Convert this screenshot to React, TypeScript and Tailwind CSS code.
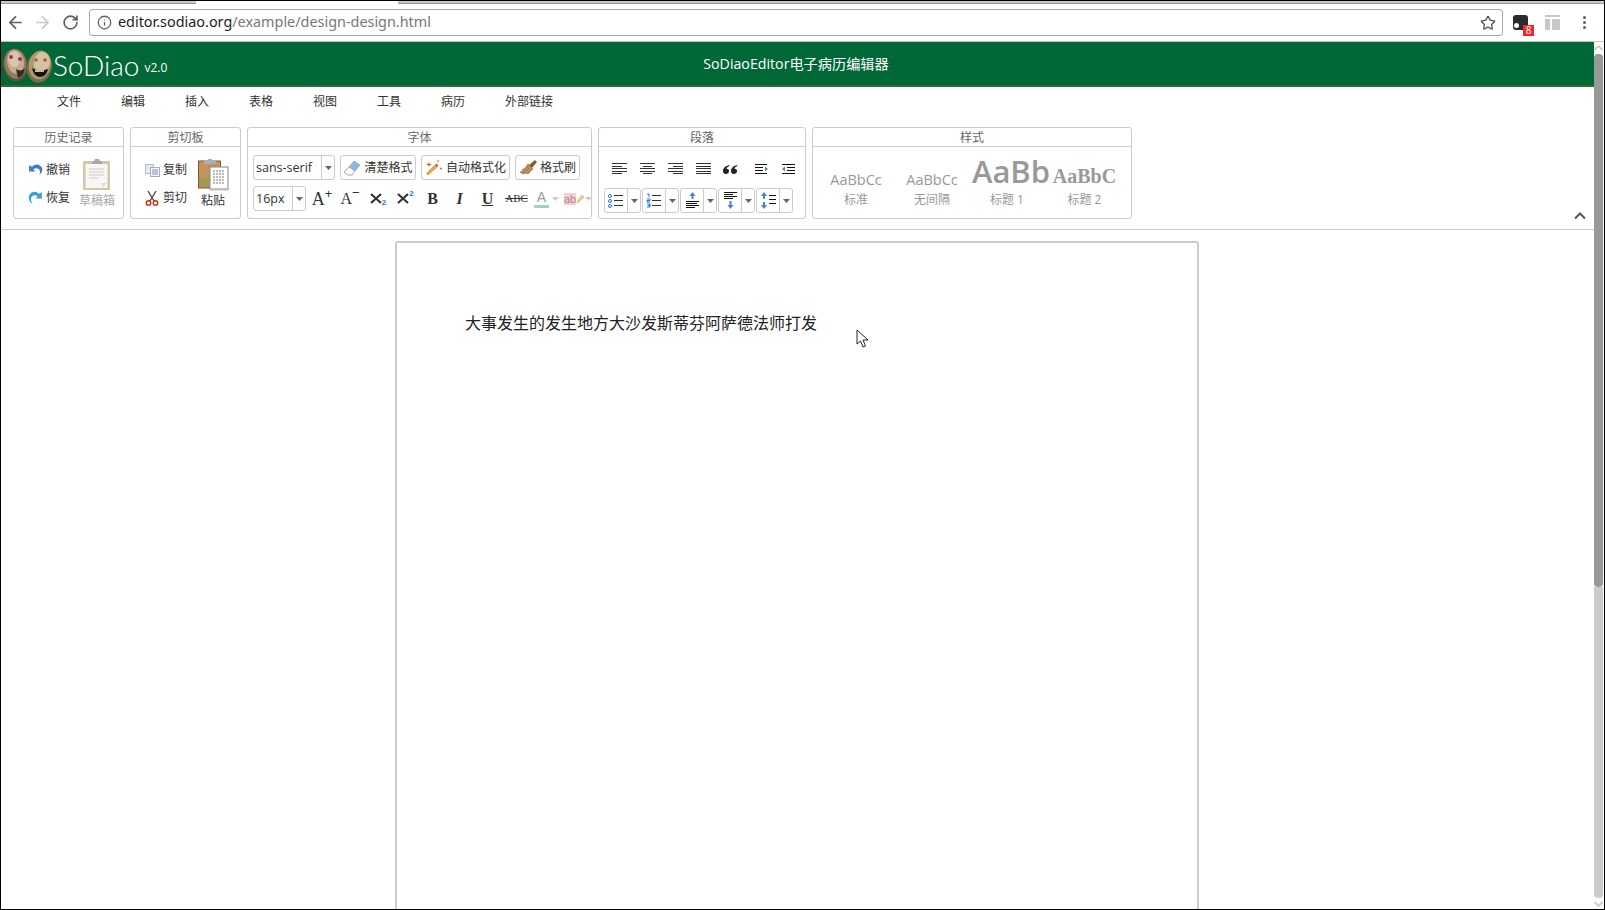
import React from "react";
import { ArrowLeft, ArrowRight, RotateCw, Info, Star } from "lucide-react";

const Caret = ({ c = "#666" }: { c?: string }) => (
  <svg width="7" height="4" viewBox="0 0 7 4" className="shrink-0"><path d="M0 0h7L3.5 4z" fill={c} /></svg>
);

const Group = ({ title, className, children }: { title: string; className: string; children: React.ReactNode }) => (
  <div className={`h-[92px] border border-[#ccc] rounded-[3px] flex flex-col shrink-0 ${className}`}>
    <div className="h-[19px] border-b border-[#ccc] text-[12px] leading-[20px] text-center text-[#666] shrink-0">{title}</div>
    <div className="flex-1 relative min-h-0">{children}</div>
  </div>
);

const Undo = () => (
  <svg width="15" height="15" viewBox="0 0 14 14"><path d="M1 2v6h6L5 6c2-2 5-1 6 1 .6 1.500.2 3-1 4 3-1 4-4 3-6.500C11.500 1.500 7 0 3.800 3.600z" fill="#3a7fc8" /></svg>
);
const Redo = () => (
  <svg width="15" height="17" viewBox="0 0 14 16"><path d="M13 2v6H7l2-2C7 4 4 5 3 7c-.6 1.500-.2 4 1.500 6C1.500 12 0 8 1 5 2.500 1.500 7 0 10.200 3.600z" fill="#3a9fd8" /></svg>
);
const Clipboard = () => (
  <svg width="30" height="33" viewBox="0 0 30 33">
    <rect x="1" y="3" width="27" height="29" fill="#cfc9a8" rx="1" />
    <rect x="3.500" y="6" width="22" height="24" fill="#f6f6f3" />
    <path d="M10 6V3h2l1-2h4l1 2h2v3z" fill="#a8a8a8" />
    <path d="M7 11h15M7 14h15M7 17h15M7 20h10" stroke="#ccc" />
    <path d="M20 30l5-5h-5z" fill="#ddd" />
  </svg>
);
const Copy = () => (
  <svg width="15" height="13" viewBox="0 0 15 13">
    <rect x="0.500" y="0.500" width="8" height="9" fill="#e8eaf2" stroke="#b5b8c8" />
    <rect x="5.500" y="3.500" width="9" height="9" fill="#f3f3f8" stroke="#a8acc0" />
    <path d="M7 6h6M7 8h6M7 10h6" stroke="#8890b8" />
  </svg>
);
const Scissors = () => (
  <svg width="14" height="16" viewBox="0 0 14 16">
    <path d="M11 1L5 11M3 1l6 10" stroke="#444" strokeWidth="1.300" fill="none" />
    <circle cx="3.500" cy="13" r="2.300" stroke="#d62c1a" strokeWidth="1.400" fill="none" />
    <circle cx="10.500" cy="13" r="2.300" stroke="#d62c1a" strokeWidth="1.400" fill="none" />
  </svg>
);
const Paste = () => (
  <svg width="31" height="33" viewBox="0 0 31 33">
    <rect x="0.500" y="3" width="22" height="27" fill="#c6925e" stroke="#7a5a34" />
    <rect x="1" y="20" width="21" height="9" fill="#a29a52" />
    <path d="M6 6V3h3l1-2h4l1 2h3v3z" fill="#a8b0b4" />
    <rect x="12" y="9" width="18" height="22" fill="#fff" stroke="#888" />
    <path d="M15 13h12M15 16h12M15 19h12M15 22h12M15 25h12" stroke="#777" strokeDasharray="2 1" />
    <path d="M13 32h18" stroke="#bbb" />
  </svg>
);
const Eraser = () => (
  <svg width="18" height="16" viewBox="0 0 18 16">
    <path d="M11 1l6 4-5 6-6-4z" fill="#8bb8e8" stroke="#8a9aaa" strokeWidth=".6" />
    <path d="M6 7l6 4-3 4H5L1 12z" fill="#fafafa" stroke="#a8a8a8" />
  </svg>
);
const Wand = () => (
  <svg width="18" height="17" viewBox="0 0 18 17">
    <path d="M3 16l-1.500-1.500L10 6l2 2z" fill="#f0a93a" stroke="#b06a20" strokeWidth=".5" />
    <path d="M10 6l1.500-1.500 2 2L12 8z" fill="#d4553a" />
    <path d="M4 3l.8 1.800L7 5.500 4.800 6.200 4 8 3.200 6.200 1 5.500l2.200-.7z" fill="#e0662a" />
    <path d="M13 0l.6 1.400 1.400.6-1.400.6L13 4l-.6-1.400L11 2l1.400-.6z" fill="#e8a030" />
    <path d="M16 8l.5 1 1 .5-1 .5-.5 1-.5-1-1-.5 1-.5z" fill="#d65a30" />
  </svg>
);
const Brush = () => (
  <svg width="18" height="15" viewBox="0 0 18 15">
    <path d="M10 5l6-5 2 2-5 6z" fill="#8a5a2c" />
    <path d="M9 4l5 5-2 2-3 3-2-1-3 1-3-2 4-1-2-1 3-2z" fill="#b98a52" stroke="#7a5a34" strokeWidth=".5" />
  </svg>
);
const lines = (rows: number[][], stroke = "#333") => rows.map(([x1, y, x2], i) => <path key={i} d={`M${x1} ${y + 0.5}H${x2}`} stroke={stroke} />);

const Align = ({ rows }: { rows: number[][] }) => <svg width="15" height="12" viewBox="0 0 15 12">{lines(rows)}</svg>;

const BulletList = () => (
  <svg width="16" height="14" viewBox="0 0 16 14">
    <circle cx="2" cy="2" r="1.500" fill="none" stroke="#2a6fdf" />
    <circle cx="2" cy="7" r="1.500" fill="none" stroke="#2a6fdf" />
    <circle cx="2" cy="12" r="1.500" fill="none" stroke="#2a6fdf" />
    {lines([[6, 1, 15], [6, 6, 15], [6, 11, 15]])}
  </svg>
);
const NumList = () => (
  <svg width="16" height="15" viewBox="0 0 16 15">
    <path d="M1 1h2v3M1 6h3v1.500H1V9h3M1 11h3v3H1M2 12.500h2" stroke="#2a6fdf" fill="none" />
    {lines([[6, 2, 15], [6, 7, 15], [6, 12, 15]])}
  </svg>
);
const SpaceAbove = () => (
  <svg width="15" height="17" viewBox="0 0 15 17">
    <path d="M7.500 0l3 4h-2v3h-2V4h-2z" fill="#4a7fdf" />
    {lines([[1, 9, 14], [1, 11, 12], [1, 13, 14], [1, 15, 10]], "#111")}
  </svg>
);
const SpaceBelow = () => (
  <svg width="15" height="17" viewBox="0 0 15 17">
    {lines([[1, 0, 14], [1, 2, 10], [1, 4, 14], [1, 6, 10]], "#111")}
    <path d="M7.500 17l-3-4h2V9h2v4h2z" fill="#4a7fdf" />
  </svg>
);
const LineHeight = () => (
  <svg width="15" height="17" viewBox="0 0 15 17">
    <path d="M3 0l3 4H4v3H2V4H0zM3 17l-3-4h2v-3h2v3h2z" fill="#4a7fdf" />
    {lines([[8, 3, 15], [8, 7, 15], [8, 11, 15]], "#111")}
  </svg>
);
const Quote = () => (
  <svg width="15" height="9" viewBox="0 0 15 9">
    <path d="M6 0C2.500 1 0 3 0 6c0 2 1.200 3 2.800 3S6 8 6 6.200 4.800 3.700 3.500 3.700C3.800 2.500 5 1.500 6.500 1zM14 0c-3.500 1-6 3-6 6 0 2 1.200 3 2.800 3S14 8 14 6.200s-1.200-2.500-2.500-2.500c.3-1.200 1.500-2.200 3-2.700z" fill="#222" />
  </svg>
);
const Cross = () => (
  <svg width="12" height="11" viewBox="0 0 12 11" className="shrink-0"><path d="M1 1l10 9M11 1L1 10" stroke="#333" strokeWidth="2.200" /></svg>
);

const Split = ({ children, w }: { children: React.ReactNode; w: string }) => (
  <div className={`h-[25px] border border-[#ccc] rounded-[3px] flex items-center shrink-0 ${w}`}>
    <div className="flex-1 flex items-center justify-center h-full">{children}</div>
    <div className="w-[13px] h-full border-l border-[#ccc] flex items-center justify-center"><Caret /></div>
  </div>
);

const SelectBox = ({ text, w, dw }: { text: string; w: string; dw: string }) => (
  <div className={`h-[25px] border border-[#ccc] rounded-[3px] flex items-center shrink-0 text-[12.5px] text-[#333] ${w}`}>
    <div className="flex-1 pl-[2px] leading-[23px]">{text}</div>
    <div className={`h-full border-l border-[#ccc] flex items-center justify-center ${dw}`}><Caret /></div>
  </div>
);

const TextBtn = ({ icon, text, w }: { icon: React.ReactNode; text: string; w: string }) => (
  <div className={`h-[25px] border border-[#ccc] rounded-[3px] flex items-center justify-center gap-[3px] shrink-0 text-[12px] text-[#333] ${w}`}>
    {icon}
    <span>{text}</span>
  </div>
);

const StyleItem = ({ sample, label, w, sampleClass, labelClass = "" }: { sample: string; label: string; w: string; sampleClass: string; labelClass?: string }) => (
  <div className={`flex flex-col items-center shrink-0 ${w}`}>
    <div className={`h-[44px] flex items-end justify-center whitespace-nowrap ${sampleClass}`}>{sample}</div>
    <div className={`text-[12px] leading-[16px] text-[#999] ${labelClass}`}>{label}</div>
  </div>
);

const Logo = () => (
  <svg width="50" height="36" viewBox="0 0 50 36" className="ml-[1px] mt-[5px] shrink-0">
    <g transform="rotate(-8 13 17)">
      <ellipse cx="13.500" cy="17" rx="12.500" ry="16.500" fill="#5e5038" />
      <ellipse cx="13.500" cy="16" rx="11" ry="15" fill="#8a8060" />
      <ellipse cx="14" cy="14" rx="8.500" ry="12" fill="#c4a890" />
      <ellipse cx="13" cy="11" rx="6" ry="8" fill="#e0c0b0" />
    </g>
    <circle cx="9" cy="9" r="2" fill="#7a4a40" />
    <circle cx="18" cy="11" r="2" fill="#7a4a40" />
    <path d="M14 21c3 2 6 2 9-1-1 6-3 9-7 10z" fill="#3a2a20" />
    <g transform="rotate(10 38 19)">
      <ellipse cx="37.500" cy="19" rx="12.500" ry="16" fill="#7a6c48" />
      <ellipse cx="37.500" cy="17" rx="11" ry="14.500" fill="#a89c70" />
      <ellipse cx="39" cy="14" rx="8" ry="10.500" fill="#d8c0a0" />
    </g>
    <circle cx="34" cy="12" r="1.800" fill="#8a6a50" />
    <circle cx="43" cy="12" r="1.800" fill="#8a6a50" />
    <path d="M30 20c4 3 11 3 16 1-1 5-4 8-8 8s-7-4-8-9z" fill="#1a1410" />
    <path d="M33 22h9v2h-9z" fill="#c8b8a0" />
  </svg>
);

export default function App() {
  return (
    <div className="w-[1605px] h-[910px] overflow-hidden bg-white border-x border-b border-black flex flex-col text-[#333] font-['Open_Sans','Noto_Sans_CJK_SC',sans-serif]">
      {/* tab strip */}
      <div className="h-[4px] shrink-0 flex border-t border-black">
        <div className="w-[195px] bg-[#c8c8c8] border-b border-[#999]" />
        <div className="w-[202px] bg-white" />
        <div className="flex-1 bg-[#c8c8c8] border-b border-[#999]" />
      </div>
      {/* browser toolbar */}
      <div className="h-[38px] shrink-0 flex items-center border-b border-[#c4c4c4] bg-white">
        <ArrowLeft size={19} strokeWidth={2.2} color="#5f5f5f" className="ml-[5px]" />
        <ArrowRight size={19} strokeWidth={2.2} color="#c8c8c8" className="ml-[8px]" />
        <RotateCw size={17} strokeWidth={2.4} color="#5f5f5f" className="ml-[10px]" />
        <div className="ml-[10px] w-[1414px] h-[27px] border border-[#a8a8a8] rounded-[3px] flex items-center shrink-0">
          <Info size={15} strokeWidth={2} color="#5f5f5f" className="ml-[7px]" />
          <div className="ml-[6px] text-[14.4px] leading-none text-[#222] font-['Noto_Sans',sans-serif] whitespace-nowrap flex-1">
            editor.sodiao.org<span className="text-[#777]">/example/design-design.html</span>
          </div>
          <Star size={16} strokeWidth={2} color="#555" className="mr-[6px]" />
        </div>
        <div className="ml-[10px] relative w-[15px] h-[15px] bg-[#2b2b2b] rounded-[3px] shrink-0">
          <div className="absolute left-[1px] bottom-[2px] w-[5px] h-[5px] rounded-full bg-white" />
          <div className="absolute left-[10px] top-[10px] w-[11px] h-[11px] bg-[#f0262c] text-white text-[10px] leading-[11px] text-center">8</div>
        </div>
        <div className="ml-[17px] w-[15px] h-[15px] flex flex-col gap-[2px] shrink-0">
          <div className="h-[2px] bg-[#c8c8c8]" />
          <div className="flex-1 flex gap-[2px]">
            <div className="w-[5px] bg-[#c8c8c8]" />
            <div className="flex-1 bg-[#c8c8c8]" />
          </div>
        </div>
        <div className="ml-[23px] flex flex-col gap-[2px] shrink-0">
          <div className="w-[3px] h-[3px] rounded-full bg-[#5f5f5f]" />
          <div className="w-[3px] h-[3px] rounded-full bg-[#5f5f5f]" />
          <div className="w-[3px] h-[3px] rounded-full bg-[#5f5f5f]" />
        </div>
      </div>

      <div className="flex-1 flex min-h-0 relative">
        {/* main page */}
        <div className="flex-1 flex flex-col min-w-0">
          {/* green header */}
          <div className="h-[45px] shrink-0 bg-[#006837] border-b-2 border-[#36692f] flex items-center text-white">
            <Logo />
            <span className="ml-[1px] mt-[2px] text-[28px] leading-none font-light font-['Lato',sans-serif]">SoDiao</span>
            <span className="ml-[5px] mt-[9px] text-[12px] leading-none">v2.0</span>
            <span className="ml-[536px] mt-[1px] text-[14.2px] leading-none whitespace-nowrap">SoDiaoEditor电子病历编辑器</span>
          </div>
          {/* menu */}
          <div className="h-[28px] shrink-0 flex items-center pl-[56px] pt-[2px] text-[12px] text-[#333]">
            {["文件", "编辑", "插入", "表格", "视图", "工具", "病历", "外部链接"].map((m) => (
              <div key={m} className="w-[64px] shrink-0">{m}</div>
            ))}
          </div>
          {/* ribbon */}
          <div className="h-[115px] shrink-0 border-b border-[#ccc] pt-[12px] pl-[12px] flex items-start gap-[6px] relative">
            <Group title="历史记录" className="w-[111px]">
              <div className="flex h-full pl-[14px] pt-[11px] text-[12px]">
                <div className="flex flex-col gap-[12px] w-[52px] mt-[4px]">
                  <div className="flex items-center gap-[3px] h-[16px]"><Undo /><span>撤销</span></div>
                  <div className="flex items-center gap-[3px] h-[16px]"><Redo /><span>恢复</span></div>
                </div>
                <div className="flex flex-col items-center w-[36px] ml-[-1px]">
                  <Clipboard />
                  <span className="text-[#aaa] mt-[1px]">草稿箱</span>
                </div>
              </div>
            </Group>
            <Group title="剪切板" className="w-[111px]">
              <div className="flex h-full pl-[14px] pt-[11px] text-[12px]">
                <div className="flex flex-col gap-[12px] w-[52px] mt-[4px]">
                  <div className="flex items-center gap-[3px] h-[16px]"><Copy /><span>复制</span></div>
                  <div className="flex items-center gap-[4px] h-[16px]"><Scissors /><span>剪切</span></div>
                </div>
                <div className="flex flex-col items-center w-[32px]">
                  <Paste />
                  <span className="mt-[1px]">粘贴</span>
                </div>
              </div>
            </Group>
            <Group title="字体" className="w-[345px]">
              <div className="pl-[5px] pt-[8px] flex flex-col gap-[6px]">
                <div className="flex gap-[5px]">
                  <SelectBox text="sans-serif" w="w-[82px]" dw="w-[13px]" />
                  <TextBtn icon={<Eraser />} text="清楚格式" w="w-[76px]" />
                  <TextBtn icon={<Wand />} text="自动格式化" w="w-[89px]" />
                  <TextBtn icon={<Brush />} text="格式刷" w="w-[65px]" />
                </div>
                <div className="flex items-center h-[25px]">
                  <SelectBox text="16px" w="w-[53px]" dw="w-[13px]" />
                  <div className="flex items-center font-['Liberation_Serif',serif] text-[#333] ml-[2px]">
                    <span className="w-[28px] text-[18px] leading-[20px] text-center">A<sup className="text-[13px] font-['Liberation_Sans',sans-serif]">+</sup></span>
                    <span className="w-[28px] text-[16px] leading-[20px] text-center">A<sup className="text-[13px] font-['Liberation_Sans',sans-serif]">−</sup></span>
                    <span className="w-[28px] flex items-end justify-center"><Cross /><span className="text-[8px] leading-[8px] font-bold text-[#2a6fdf] font-['Liberation_Sans',sans-serif] mb-[-3px]">2</span></span>
                    <span className="w-[27px] flex items-start justify-center"><Cross /><span className="text-[8px] leading-[8px] font-bold text-[#2a6fdf] font-['Liberation_Sans',sans-serif] mt-[-3px]">2</span></span>
                    <span className="w-[27px] text-center text-[16px] font-bold">B</span>
                    <span className="w-[27px] text-center text-[16px] italic font-bold">I</span>
                    <span className="w-[29px] text-center text-[16px] font-bold underline">U</span>
                    <span className="w-[29px] text-center text-[11px] line-through">ABC</span>
                    <span className="ml-[3px] w-[15px] text-center text-[14px] leading-[15px] font-['Liberation_Sans',sans-serif] text-[#999] border-b-[3px] border-[#a0cfce]">A</span>
                    <span className="ml-[3px]"><Caret c="#ccc" /></span>
                    <span className="ml-[5px] w-[12px] h-[12px] text-[11px] leading-[12px] font-['Liberation_Sans',sans-serif] text-[#aa8888] bg-[#f6d0d0] whitespace-nowrap">ab</span>
                    <svg width="8" height="10" viewBox="0 0 8 10" className="shrink-0"><path d="M1 9l1-3 4-5 2 2-5 5z" fill="#f0d080" stroke="#d8a890" strokeWidth=".6" /></svg>
                    <span className="ml-[1px]"><Caret c="#ccc" /></span>
                  </div>
                </div>
              </div>
            </Group>
            <Group title="段落" className="w-[208px]">
              <div className="pl-[5px] flex flex-col">
                <div className="h-[40px] flex items-center pt-[4px] pl-[8px]">
                  <div className="w-[28px]"><Align rows={[[0, 0, 15], [0, 3, 10], [0, 5, 15], [0, 8, 15], [0, 10, 10]]} /></div>
                  <div className="w-[28px]"><Align rows={[[0, 0, 15], [3, 3, 12], [0, 5, 15], [0, 8, 15], [3, 10, 12]]} /></div>
                  <div className="w-[28px]"><Align rows={[[0, 0, 15], [5, 3, 15], [0, 5, 15], [0, 8, 15], [5, 10, 15]]} /></div>
                  <div className="w-[27px]"><Align rows={[[0, 0, 15], [0, 3, 15], [0, 5, 15], [0, 8, 15], [0, 10, 15]]} /></div>
                  <div className="w-[31px]"><Quote /></div>
                  <div className="w-[27px]"><svg width="15" height="13" viewBox="0 0 15 13">{lines([[1, 1, 13], [1, 4, 9], [1, 7, 9], [1, 10, 13]], "#111")}<path d="M11 3.500l3 2.500-3 2.500z" fill="#4a7fdf" /></svg></div>
                  <div><svg width="15" height="13" viewBox="0 0 15 13">{lines([[1, 1, 14], [6, 4, 14], [6, 7, 14], [1, 10, 14]], "#111")}<path d="M4 3.500L1 6l3 2.500z" fill="#4a7fdf" /></svg></div>
                </div>
                <div className="flex gap-[1px] mt-[1px]">
                  <Split w="w-[37px]"><BulletList /></Split>
                  <Split w="w-[37px]"><NumList /></Split>
                  <Split w="w-[37px]"><SpaceAbove /></Split>
                  <Split w="w-[37px]"><SpaceBelow /></Split>
                  <Split w="w-[37px]"><LineHeight /></Split>
                </div>
              </div>
            </Group>
            <Group title="样式" className="w-[320px]">
              <div className="flex pl-[17px] pt-[1px]">
                <StyleItem sample="AaBbCc" label="标准" w="w-[52px]" sampleClass="text-[14.5px] leading-[25px] text-[#999]" />
                <StyleItem sample="AaBbCc" label="无间隔" w="w-[52px] ml-[24px]" sampleClass="text-[14.5px] leading-[25px] text-[#999]" />
                <StyleItem sample="AaBb" label="标题 1" w="w-[74px] ml-[16px]" labelClass="pr-[8px]" sampleClass="text-[31px] leading-[42px] font-semibold text-[#999]" />
                <StyleItem sample="AaBbC" label="标题 2" w="w-[63px] ml-[5px]" sampleClass="text-[20px] leading-[32px] font-bold text-[#999] font-['Liberation_Serif',serif]" />
              </div>
            </Group>
            <svg width="12" height="8" viewBox="0 0 12 8" className="absolute left-[1573px] top-[97px]"><path d="M1 6.500l5-5 5 5" fill="none" stroke="#555" strokeWidth="2" /></svg>
          </div>
          {/* document area */}
          <div className="flex-1 min-h-0 overflow-hidden pl-[394px] pt-[11px]">
            <div className="w-[804px] h-[800px] border-2 border-[#ccc] rounded-[3px] pl-[68px] pt-[69px] text-[16px] leading-[20px] text-[#222] font-['Noto_Sans_CJK_SC',sans-serif]">
              大事发生的发生地方大沙发斯蒂芬阿萨德法师打发
            </div>
          </div>
        </div>
        {/* scrollbar */}
        <div className="w-[9px] mr-[1px] shrink-0 flex flex-col items-stretch">
          <div className="h-[12px] flex items-center justify-center shrink-0">
            <svg width="9" height="6" viewBox="0 0 9 6"><path d="M.5 5l4-4 4 4" fill="none" stroke="#ccc" strokeWidth="2" /></svg>
          </div>
          <div className="h-[533px] bg-[#999] rounded-[4px] shrink-0" />
          <div className="flex-1 bg-[#ccc] rounded-b-[4px]" />
          <div className="h-[11px] flex items-center justify-center shrink-0">
            <svg width="9" height="6" viewBox="0 0 9 6"><path d="M.5 1l4 4 4-4" fill="none" stroke="#ccc" strokeWidth="2" /></svg>
          </div>
        </div>
        {/* mouse pointer */}
        <svg width="13" height="19" viewBox="0 0 13 19" className="absolute left-[855px] top-[287px]">
          <path d="M1 1v14l3.500-3 2.500 6 2.500-1-2.500-6h5z" fill="#fff" stroke="#223" strokeWidth="1" />
        </svg>
      </div>
    </div>
  );
}
